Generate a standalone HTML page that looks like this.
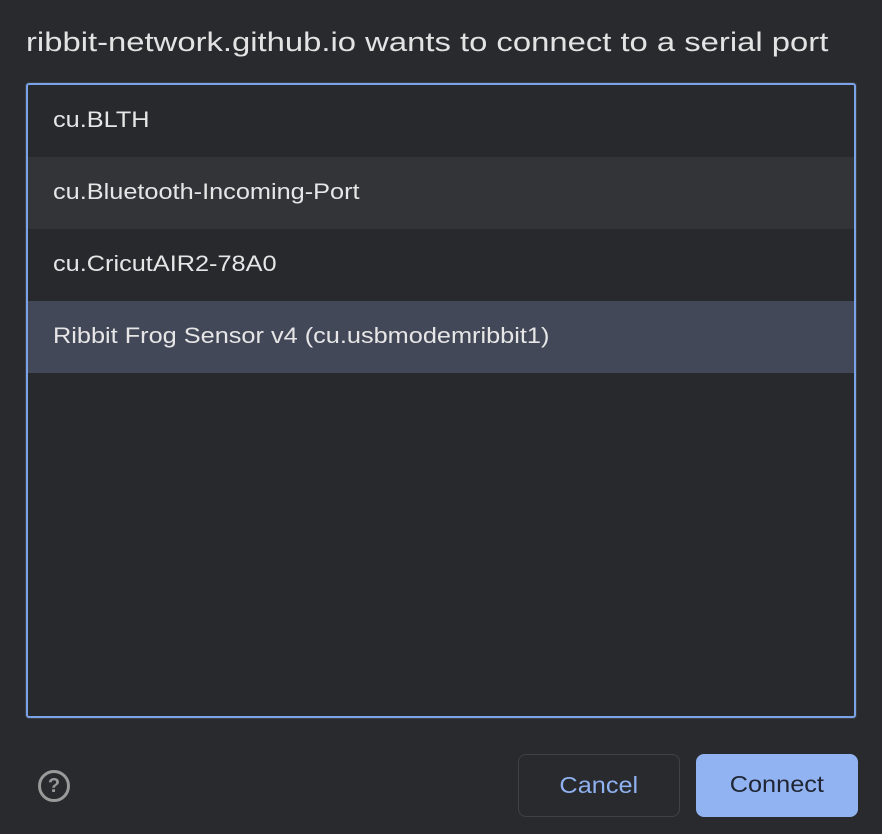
<!DOCTYPE html>
<html><head><style>
html,body{margin:0;width:882px;height:834px;background:#292a2e;overflow:hidden;font-family:"Liberation Sans",Helvetica,Arial,sans-serif;}
.title{position:absolute;left:26px;top:27px;font-size:27px;color:#e3e3e3;white-space:nowrap;transform:scaleX(1.215);transform-origin:left}
.box{position:absolute;left:26px;top:83px;width:826px;height:631px;border:2px solid #7aa2e8;box-shadow:0 0 0 1px #3c3e44;border-radius:3px;background:#28292d;overflow:hidden}
.row{height:72px;line-height:70px;padding-left:25px;font-size:22px;color:#e6e6e6;white-space:nowrap}
.row span{display:inline-block;transform:scaleX(1.15);transform-origin:left}
.b{background:#333438}.s{background:#434859}
.help{position:absolute;left:38px;top:770px;width:32px;height:32px;border:3px solid #9a9a9a;border-radius:50%;box-sizing:border-box;color:#9a9a9a;font-weight:bold;font-size:20px;text-align:center;line-height:26px}
.btn{position:absolute;top:754px;height:63px;border-radius:8px;box-sizing:border-box;font-size:23px;text-align:center;line-height:61px}
.btn span{display:inline-block;transform:scaleX(1.1)}
.c{left:518px;width:162px;border:1px solid #3f4146;color:#8fb1f0}
.k{left:696px;width:162px;background:#91b3f2;color:#1f2533}
</style></head><body>
<div class="title">ribbit-network.github.io wants to connect to a serial port</div>
<div class="box">
<div class="row"><span>cu.BLTH</span></div>
<div class="row b"><span>cu.Bluetooth-Incoming-Port</span></div>
<div class="row"><span>cu.CricutAIR2-78A0</span></div>
<div class="row s"><span>Ribbit Frog Sensor v4 (cu.usbmodemribbit1)</span></div>
</div>
<div class="help">?</div>
<div class="btn c"><span>Cancel</span></div>
<div class="btn k"><span>Connect</span></div>
</body></html>
